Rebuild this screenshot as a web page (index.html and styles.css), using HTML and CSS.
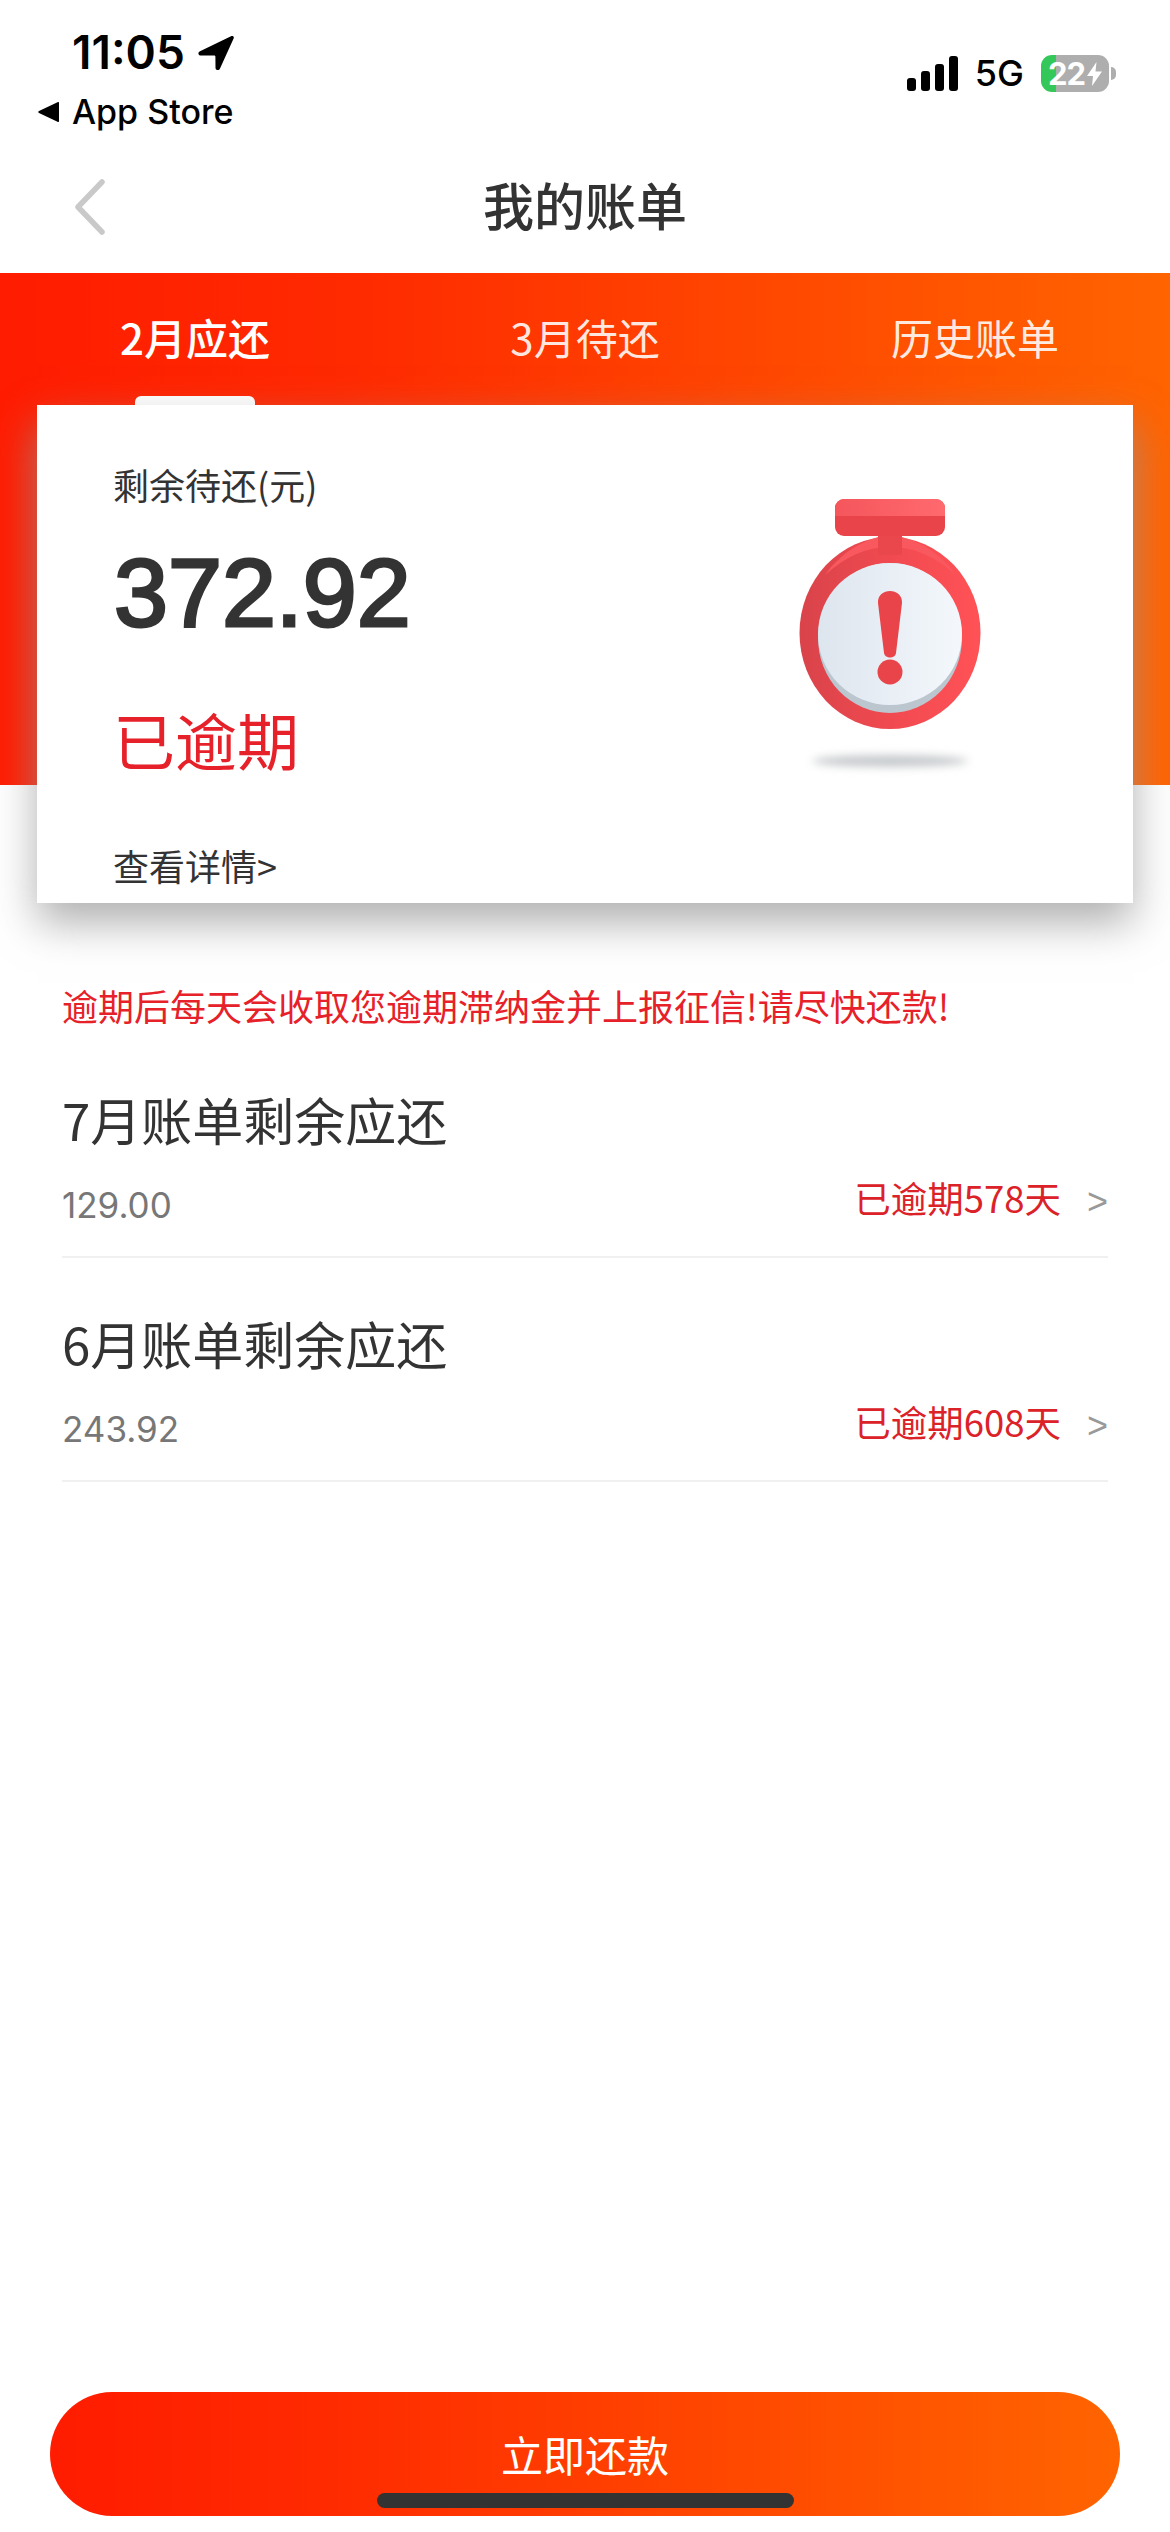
FILE: index.html
```html
<!DOCTYPE html>
<html lang="zh-CN">
<head>
<meta charset="utf-8">
<title>我的账单</title>
<link rel="stylesheet" href="styles.css">
</head>
<body>
<header class="status">
  <div class="status-left">
    <div class="clock-row">
      <span class="clock">11:05</span>
      <svg class="loc" viewBox="0 0 37 35" aria-hidden="true"><path d="M34 1.2 3 16.2c-2.6 1.3-1.8 4.4 1 4.4h13.2c.7 0 1.2.5 1.2 1.2l.1 11c0 2.6 3.2 3.3 4.4 1L36.6 3.6c.9-1.9-.8-3.3-2.6-2.4Z"/></svg>
    </div>
    <div class="back-row">
      <svg class="back-tri" viewBox="0 0 22 20" aria-hidden="true"><path d="M21 1v18a1 1 0 0 1-1.500.8L1 11a1.200 1.200 0 0 1 0-2L19.500.2A1 1 0 0 1 21 1Z"/></svg>
      <span class="back-label">App Store</span>
    </div>
  </div>
  <div class="status-right">
    <svg class="signal" viewBox="0 0 51 35" aria-hidden="true">
      <rect x="0" y="22" width="9" height="13" rx="3"/>
      <rect x="14" y="15" width="9" height="20" rx="3"/>
      <rect x="28" y="8" width="9" height="27" rx="3"/>
      <rect x="42" y="0" width="9" height="35" rx="3"/>
    </svg>
    <span class="net">5G</span>
    <div class="battery-wrap">
      <div class="battery">
        <span class="battery-num">22</span>
        <svg class="bolt" viewBox="0 0 15 24" aria-hidden="true"><path d="M9.500 0 0 14h6l-1 10L15 9.500H8.500Z"/></svg>
      </div>
      <span class="battery-nub"></span>
    </div>
  </div>
</header>

<nav class="nav">
  <svg class="nav-back" viewBox="0 0 32 56" aria-hidden="true"><path d="M29 3 5 28l24 25" fill="none" stroke="#c9c9c9" stroke-width="5.500" stroke-linecap="round" stroke-linejoin="round"/></svg>
  <h1 class="nav-title">我的账单</h1>
  <span class="nav-side"></span>
</nav>

<section class="hero">
  <div class="tabs">
    <div class="tab tab-active">2月应还<span class="tab-bar"></span></div>
    <div class="tab">3月待还</div>
    <div class="tab">历史账单</div>
  </div>
  <div class="card">
    <div class="card-text">
      <div class="card-label">剩余待还(元)</div>
      <div class="card-amount">372.92</div>
      <div class="card-state">已逾期</div>
      <div class="card-link">查看详情&gt;</div>
    </div>
    <svg class="alarm" viewBox="0 0 200 285" aria-hidden="true">
      <defs>
        <linearGradient id="ring" x1="0" y1="0" x2="1" y2="0">
          <stop offset="0" stop-color="#d9434a"/><stop offset=".5" stop-color="#f04a50"/><stop offset="1" stop-color="#ff5257"/>
        </linearGradient>
        <linearGradient id="cap" x1="0" y1="0" x2="1" y2="0">
          <stop offset="0" stop-color="#f4565c"/><stop offset="1" stop-color="#ff6a6e"/>
        </linearGradient>
        <linearGradient id="face" x1="0" y1="0" x2="1" y2="0">
          <stop offset="0" stop-color="#dde5ee"/><stop offset="1" stop-color="#f4f8fc"/>
        </linearGradient>
        <filter id="soft" x="-20%" y="-100%" width="140%" height="300%"><feGaussianBlur stdDeviation="4"/></filter>
      </defs>
      <ellipse cx="99" cy="262" rx="78" ry="6" fill="#c6c9cc" filter="url(#soft)"/>
      <ellipse cx="99" cy="134" rx="90.500" ry="96" fill="url(#ring)"/>
      <path d="M34 76C50 54 68 44 87 38h24c20 6 38 16 54 38-20-18-42-28-66-28S54 58 34 76Z" fill="#f9595e"/>
      <rect x="87" y="30" width="24" height="26" fill="#ea474d"/>
      <rect x="44" y="0" width="110" height="37" rx="9" fill="#e8444a"/>
      <path d="M53 0h92a9 9 0 0 1 9 9v8H44V9a9 9 0 0 1 9-9Z" fill="url(#cap)"/>
      <ellipse cx="99" cy="139" rx="72" ry="75" fill="#bcc6cf"/>
      <ellipse cx="99" cy="135" rx="72" ry="71" fill="url(#face)"/>
      <path d="M87 104c-1-16 25-16 24 0l-6 50c-.7 6-11 6-12 0Z" fill="#e8444a"/>
      <circle cx="99" cy="173" r="12.500" fill="#e8444a"/>
    </svg>
  </div>
</section>

<main class="bills">
  <p class="notice">逾期后每天会收取您逾期滞纳金并上报征信!请尽快还款!</p>
  <article class="bill">
    <h2 class="bill-title">7月账单剩余应还</h2>
    <div class="bill-meta">
      <span class="bill-amount">129.00</span>
      <span class="bill-status">已逾期578天</span>
      <span class="bill-arrow">&gt;</span>
    </div>
  </article>
  <article class="bill">
    <h2 class="bill-title">6月账单剩余应还</h2>
    <div class="bill-meta">
      <span class="bill-amount">243.92</span>
      <span class="bill-status">已逾期608天</span>
      <span class="bill-arrow">&gt;</span>
    </div>
  </article>
</main>

<footer class="footer">
  <button class="pay" type="button">立即还款</button>
</footer>
<div class="home-indicator"></div>
</body>
</html>
```
FILE: styles.css
```css
* { box-sizing: border-box; }
html, body { margin: 0; padding: 0; }
body {
  position: relative;
  width: 1170px;
  height: 2532px;
  overflow: hidden;
  display: flex;
  flex-direction: column;
  background: #fff;
  color: #333;
  font-family: "Noto Sans CJK SC", "Liberation Sans", sans-serif;
}

/* status bar */
.status {
  height: 140px;
  display: flex;
  justify-content: space-between;
  padding: 29px 54px 0 38px;
}
.status-left { display: flex; flex-direction: column; }
.clock-row { display: flex; align-items: center; gap: 12px; margin-left: 34px; height: 46px; }
.clock { font: 600 46px/46px Inter, sans-serif; color: #000; }
.loc { width: 37px; height: 35px; fill: #000; }
.back-row { display: flex; align-items: center; gap: 12px; margin-top: 18px; height: 38px; }
.back-tri { width: 22px; height: 20px; fill: #000; }
.back-label { font: 500 34px/38px Inter, sans-serif; color: #000; }
.status-right { display: flex; align-items: center; height: 37px; margin-top: 26px; }
.signal { width: 51px; height: 35px; fill: #000; margin-right: 17px; }
.net { font: 500 36px/37px Inter, sans-serif; color: #000; margin-right: 17px; }
.battery-wrap { display: flex; align-items: center; gap: 2px; }
.battery {
  width: 68px;
  height: 37px;
  border-radius: 11px;
  background: linear-gradient(90deg, #34c759 22%, #aeaeae 22%);
  display: flex;
  align-items: center;
  justify-content: center;
  gap: 2px;
}
.battery-num { font: 700 31px/37px Inter, sans-serif; color: #fff; letter-spacing: -1px; }
.bolt { width: 15px; height: 24px; fill: #fff; }
.battery-nub { width: 5px; height: 13px; border-radius: 0 6px 6px 0; background: #aeaeae; }

/* nav */
.nav {
  height: 133px;
  display: grid;
  grid-template-columns: 1fr auto 1fr;
  align-items: center;
  padding: 0 73px 6px;
}
.nav-back { width: 32px; height: 56px; margin-top: 6px; }
.nav-title { margin: 0; font-size: 51px; line-height: 60px; font-weight: 500; color: #333; }

/* hero */
.hero {
  background: linear-gradient(90deg, #ff1c00 0%, #ff2a00 30%, #ff6400 100%) top / 100% 512px no-repeat;
}
.tabs { height: 132px; display: grid; grid-template-columns: repeat(3, 1fr); }
.tab {
  display: flex;
  flex-direction: column;
  align-items: center;
  padding-top: 39px;
  font-size: 42px;
  line-height: 50px;
  color: rgba(255, 255, 255, .9);
}
.tab-active { color: #fff; font-weight: 500; }
.tab-bar { width: 120px; height: 12px; margin-top: 34px; border-radius: 6px 6px 0 0; background: #fff; }
.card {
  height: 498px;
  margin: 0 37px;
  padding: 54px 0 0 76px;
  position: relative;
  display: flex;
  justify-content: space-between;
  background: #fff;
  box-shadow: 0 20px 40px rgba(150, 150, 150, .75);
}
.card-text { display: flex; flex-direction: column; }
.card-label { font-size: 36px; line-height: 50px; color: #333; }
.card-amount {
  margin: 29px 0 0 1px;
  font: 400 97px/110px "Liberation Sans", sans-serif;
  color: #333;
  -webkit-text-stroke: 3px #333;
}
.card-state { margin-top: 49px; font-size: 62px; line-height: 84px; color: #e62129; }
.card-link { margin-top: 59px; font-size: 36px; line-height: 50px; color: #333; }
.alarm { width: 200px; height: 285px; margin: 40px 142px 0 0; flex: none; }

/* bills */
.bills { padding: 0 62px; }
.notice { margin: 80px 0 7px; font-size: 36px; line-height: 44px; color: #e62129; }
.bill { height: 224px; padding-top: 57px; border-bottom: 2px solid #f0f0f0; }
.bill-title { margin: 0; font-size: 51px; line-height: 56px; font-weight: 400; color: #333; }
.bill-meta { display: flex; align-items: flex-start; margin-top: 33px; height: 44px; }
.bill-amount { font: 400 35px/44px Inter, sans-serif; color: #777; margin-top: 3px; margin-right: auto; }
.bill-status { font-size: 36.500px; line-height: 44px; color: #dc2229; margin-top: -4px; }
.bill-arrow { margin-left: 26px; font: 400 36px/44px "Liberation Sans", sans-serif; color: #999; }

/* footer */
.footer { margin-top: auto; padding: 0 50px 16px; }
.pay {
  display: block;
  width: 100%;
  height: 124px;
  border: 0;
  border-radius: 62px;
  padding: 0;
  background: linear-gradient(90deg, #ff1c00 0%, #ff2a00 25%, #ff6400 100%);
  color: #fff;
  font: 400 42px/50px "Noto Sans CJK SC", sans-serif;
}
.home-indicator {
  position: absolute;
  left: 377px;
  bottom: 24px;
  width: 417px;
  height: 15px;
  border-radius: 8px;
  background: #333;
}
```
